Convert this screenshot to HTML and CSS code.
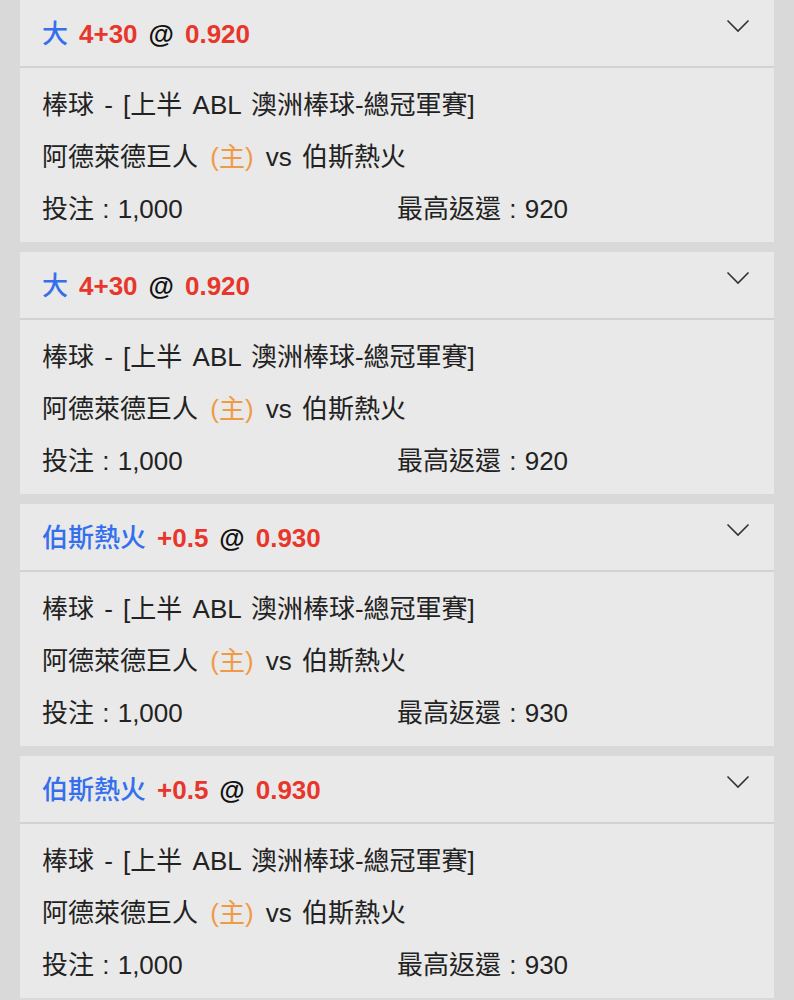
FILE: index.html
```html
<!DOCTYPE html>
<html lang="zh-Hant">
<head>
    <meta charset="UTF-8">
    <meta name="viewport" content="width=device-width, initial-scale=1.0">
    <title>Bet Slip</title>
    <link rel="stylesheet" href="styles.css">
</head>
<body>
    <div class="list">

        <div class="bet-card">
            <div class="bet-header">
                <div class="bet-title">
                    <span class="pick">大</span>
                    <span class="line">4+30</span>
                    <span class="at">@</span>
                    <span class="odds">0.920</span>
                </div>
                <svg class="chevron" width="24" height="14" viewBox="0 0 24 14"><path d="M1.5 1.5 L12 12 L22.5 1.5" fill="none" stroke="#333" stroke-width="1.6"/></svg>
            </div>
            <div class="bet-body">
                <p>棒球 - [上半 ABL 澳洲棒球-總冠軍賽]</p>
                <p>阿德萊德巨人 <span class="home">(主)</span> vs 伯斯熱火</p>
                <div class="amounts">
                    <p>投注 : 1,000</p>
                    <p>最高返還 : 920</p>
                </div>
            </div>
        </div>

        <div class="bet-card">
            <div class="bet-header">
                <div class="bet-title">
                    <span class="pick">大</span>
                    <span class="line">4+30</span>
                    <span class="at">@</span>
                    <span class="odds">0.920</span>
                </div>
                <svg class="chevron" width="24" height="14" viewBox="0 0 24 14"><path d="M1.5 1.5 L12 12 L22.5 1.5" fill="none" stroke="#333" stroke-width="1.6"/></svg>
            </div>
            <div class="bet-body">
                <p>棒球 - [上半 ABL 澳洲棒球-總冠軍賽]</p>
                <p>阿德萊德巨人 <span class="home">(主)</span> vs 伯斯熱火</p>
                <div class="amounts">
                    <p>投注 : 1,000</p>
                    <p>最高返還 : 920</p>
                </div>
            </div>
        </div>

        <div class="bet-card">
            <div class="bet-header">
                <div class="bet-title">
                    <span class="pick">伯斯熱火</span>
                    <span class="line">+0.5</span>
                    <span class="at">@</span>
                    <span class="odds">0.930</span>
                </div>
                <svg class="chevron" width="24" height="14" viewBox="0 0 24 14"><path d="M1.5 1.5 L12 12 L22.5 1.5" fill="none" stroke="#333" stroke-width="1.6"/></svg>
            </div>
            <div class="bet-body">
                <p>棒球 - [上半 ABL 澳洲棒球-總冠軍賽]</p>
                <p>阿德萊德巨人 <span class="home">(主)</span> vs 伯斯熱火</p>
                <div class="amounts">
                    <p>投注 : 1,000</p>
                    <p>最高返還 : 930</p>
                </div>
            </div>
        </div>

        <div class="bet-card">
            <div class="bet-header">
                <div class="bet-title">
                    <span class="pick">伯斯熱火</span>
                    <span class="line">+0.5</span>
                    <span class="at">@</span>
                    <span class="odds">0.930</span>
                </div>
                <svg class="chevron" width="24" height="14" viewBox="0 0 24 14"><path d="M1.5 1.5 L12 12 L22.5 1.5" fill="none" stroke="#333" stroke-width="1.6"/></svg>
            </div>
            <div class="bet-body">
                <p>棒球 - [上半 ABL 澳洲棒球-總冠軍賽]</p>
                <p>阿德萊德巨人 <span class="home">(主)</span> vs 伯斯熱火</p>
                <div class="amounts">
                    <p>投注 : 1,000</p>
                    <p>最高返還 : 930</p>
                </div>
            </div>
        </div>

    </div>
</body>
</html>
```

FILE: styles.css
```css
body {
    font-family: 'Liberation Sans', 'Noto Sans CJK TC', sans-serif;
    margin: 0;
    padding: 0;
    background-color: #d9d9d9;
    color: #222;
}

.list {
    padding: 0 20px;
}

.bet-card {
    background: #e9e9e9;
    margin-bottom: 10px;
}

.bet-header {
    display: flex;
    justify-content: space-between;
    align-items: flex-start;
    height: 66px;
    padding: 0 24px 0 22px;
    border-bottom: 2px solid #d2d2d2;
}

.bet-title {
    display: flex;
    gap: 11px;
    font-size: 26px;
    line-height: 68px;
    font-weight: bold;
}

.pick {
    color: #3470ee;
    font-weight: 500;
}

.line, .odds {
    color: #e8362b;
}

.at {
    color: #111;
}

.chevron {
    margin-top: 19px;
}

.bet-body {
    padding: 11px 22px 7px;
    font-size: 26px;
    word-spacing: 3px;
}

.bet-body p {
    margin: 0;
    line-height: 52px;
}

.home {
    color: #f09a45;
    margin: 0 2px;
}

.amounts {
    display: grid;
    grid-template-columns: 1fr 1fr;
    word-spacing: 1px;
}
```
